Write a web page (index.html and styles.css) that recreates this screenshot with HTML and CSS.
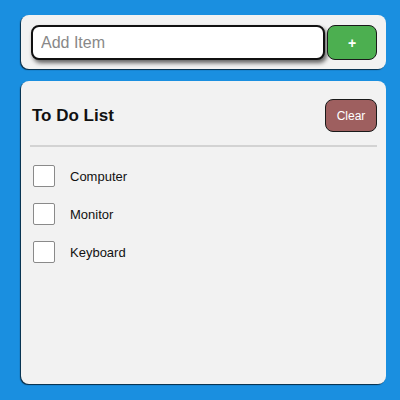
FILE: index.html
```html
<!DOCTYPE html>
<html>
<head>
<meta charset="utf-8">
<link rel="stylesheet" href="styles.css">
</head>
<body>
<div class="page">
  <div class="card add-card">
    <input class="add-input" type="text" placeholder="Add Item">
    <button class="add-btn">+</button>
  </div>
  <div class="card list-card">
    <div class="list-head">
      <h2 class="title">To Do List</h2>
      <button class="clear-btn">Clear</button>
    </div>
    <div class="sep"></div>
    <ul class="items">
      <li class="item"><span class="box"></span><span class="label">Computer</span></li>
      <li class="item"><span class="box"></span><span class="label">Monitor</span></li>
      <li class="item"><span class="box"></span><span class="label">Keyboard</span></li>
    </ul>
  </div>
</div>
</body>
</html>
```
FILE: styles.css
```css
html, body {
  margin: 0;
  padding: 0;
  background: #1a8fe0;
  font-family: "Liberation Sans", Arial, sans-serif;
}
.page {
  padding: 15px 14px 16px 21px;
  display: flex;
  flex-direction: column;
  gap: 12px;
  height: 400px;
  box-sizing: border-box;
}
.card {
  background: #f2f2f2;
  border-radius: 8px;
  box-shadow: -1px 1px 1px rgba(0,0,0,0.7);
  box-sizing: border-box;
}
.add-card {
  display: flex;
  padding: 10px 9px 9px 10px;
  gap: 2px;
  height: 54px;
}
.add-input {
  flex: 1;
  height: 35px;
  box-sizing: border-box;
  border: 2px solid #111;
  border-radius: 8px;
  box-shadow: 2px 3px 4px rgba(0,0,0,0.6);
  padding: 0 8px;
  font-family: "Liberation Sans", Arial, sans-serif;
  font-size: 16px;
  color: #222;
  background: #fff;
  outline: none;
  caret-color: #000;
}
.add-input::placeholder { color: #888; }
.add-btn {
  width: 50px;
  height: 35px;
  background: #4caf50;
  border: 1.5px solid #1a1a1a;
  border-radius: 8px;
  color: #fff;
  font-size: 14px;
  font-weight: bold;
  font-family: "Liberation Sans", Arial, sans-serif;
  padding: 0;
}
.list-card {
  flex: 1;
  padding: 18px 9px 10px 11px;
}
.list-head {
  display: flex;
  justify-content: space-between;
  align-items: center;
  height: 33px;
}
.title {
  margin: 0;
  font-size: 17px;
  font-weight: bold;
  color: #111;
}
.clear-btn {
  width: 52px;
  height: 33px;
  background: #9e5f5f;
  border: 1.5px solid #1a1a1a;
  border-radius: 8px;
  color: #fff;
  font-size: 12px;
  font-family: "Liberation Sans", Arial, sans-serif;
  padding: 0;
}
.sep {
  height: 2px;
  background: #d3d3d3;
  margin: 13px 0 0 -2px;
}
.items {
  list-style: none;
  margin: 0;
  padding: 18px 0 0 1px;
  display: flex;
  flex-direction: column;
  gap: 16px;
}
.item {
  display: flex;
  align-items: center;
  height: 22px;
}
.box {
  width: 22px;
  height: 22px;
  box-sizing: border-box;
  border: 1.5px solid #8a8a8a;
  border-radius: 2px;
  background: #fff;
}
.label {
  margin-left: 15px;
  font-size: 13px;
  color: #111;
}
```
